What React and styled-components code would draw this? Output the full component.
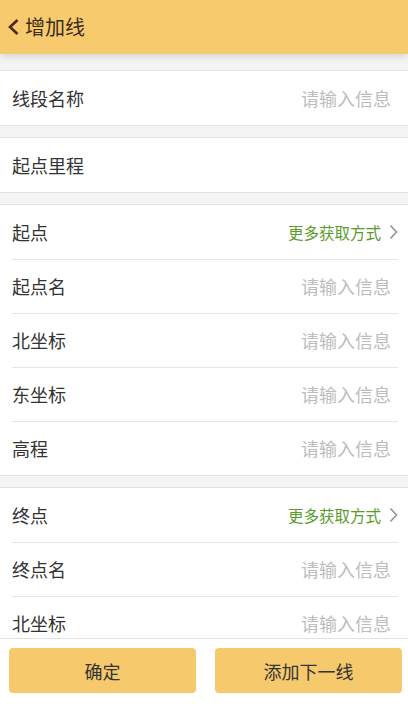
import styled, { createGlobalStyle } from 'styled-components';

const GlobalStyle = createGlobalStyle`
	html, body {
		margin: 0;
		padding: 0;
		background: #f4f4f4;
	}
	body {
		font-family: 'Noto Sans CJK SC', 'Noto Sans', sans-serif;
		color: #333;
	}
	* {
		box-sizing: border-box;
	}
`;

const Page = styled.div`
	display: flex;
	flex-direction: column;
	width: 408px;
	height: 704px;
	overflow: hidden;
	background: #f4f4f4;
`;

const Header = styled.header`
	position: relative;
	z-index: 1;
	display: flex;
	align-items: center;
	gap: 5px;
	height: 54px;
	flex-shrink: 0;
	padding-left: 7px;
	background: #f7ca6e;
	box-shadow: 0 2px 8px rgba(0, 0, 0, 0.14);
`;

const Title = styled.h1`
	margin: 0 0 1px;
	font-size: 20px;
	font-weight: 400;
	color: #3a2a1a;
`;

const Content = styled.main`
	flex: 1;
	overflow: hidden;
	padding-top: 16px;
	display: flex;
	flex-direction: column;
	gap: 11px;
`;

const Section = styled.section`
	flex-shrink: 0;
	background: #fff;
	border-top: 1px solid #e2e2e2;
	border-bottom: 1px solid #e2e2e2;

	& > * + *::before {
		content: '';
		position: absolute;
		top: 0;
		left: 12px;
		right: 10px;
		height: 1px;
		background: #e6e6e6;
	}
`;

const Row = styled.div`
	position: relative;
	display: flex;
	align-items: center;
	justify-content: space-between;
	height: 54px;
	padding: 0 ${(p) => (p.$link ? '10px' : '17px')} 0 12px;
`;

const Label = styled.span`
	font-size: 18px;
	color: #333;
`;

const Placeholder = styled.span`
	font-size: 18px;
	color: #bdbdbd;
`;

const MoreLink = styled.span`
	display: flex;
	align-items: center;
	gap: 8px;
	font-size: 15.5px;
	color: #5a9b2a;
`;

const Footer = styled.footer`
	display: flex;
	gap: 19px;
	flex-shrink: 0;
	height: 66px;
	padding: 9px 6px 11px 9px;
	background: #fff;
	border-top: 1px solid #e2e2e2;
`;

const Button = styled.button`
	flex: 1;
	height: 45px;
	border: none;
	border-radius: 4px;
	background: #f6c96d;
	font-family: inherit;
	font-size: 18px;
	color: #333;
`;

const BackIcon = () => (
	<svg width='13' height='18' viewBox='0 0 13 18'>
		<path d='M10.5 2 L3 9 L10.5 16' fill='none' stroke='#4a2810' strokeWidth='2.6' />
	</svg>
);

const ChevronIcon = () => (
	<svg width='9' height='16' viewBox='0 0 9 16'>
		<path d='M1.5 1.5 L7.5 8 L1.5 14.5' fill='none' stroke='#8a8a8a' strokeWidth='1.4' />
	</svg>
);

const InputRow = ({ label }) => (
	<Row>
		<Label>{label}</Label>
		<Placeholder>请输入信息</Placeholder>
	</Row>
);

const LinkRow = ({ label }) => (
	<Row $link>
		<Label>{label}</Label>
		<MoreLink>
			更多获取方式
			<ChevronIcon />
		</MoreLink>
	</Row>
);

export default function App() {
	return (
		<>
			<GlobalStyle />
			<Page>
				<Header>
					<BackIcon />
					<Title>增加线</Title>
				</Header>
				<Content>
					<Section>
						<InputRow label='线段名称' />
					</Section>
					<Section>
						<Row>
							<Label>起点里程</Label>
						</Row>
					</Section>
					<Section>
						<LinkRow label='起点' />
						<InputRow label='起点名' />
						<InputRow label='北坐标' />
						<InputRow label='东坐标' />
						<InputRow label='高程' />
					</Section>
					<Section>
						<LinkRow label='终点' />
						<InputRow label='终点名' />
						<InputRow label='北坐标' />
					</Section>
				</Content>
				<Footer>
					<Button>确定</Button>
					<Button>添加下一线</Button>
				</Footer>
			</Page>
		</>
	);
}
